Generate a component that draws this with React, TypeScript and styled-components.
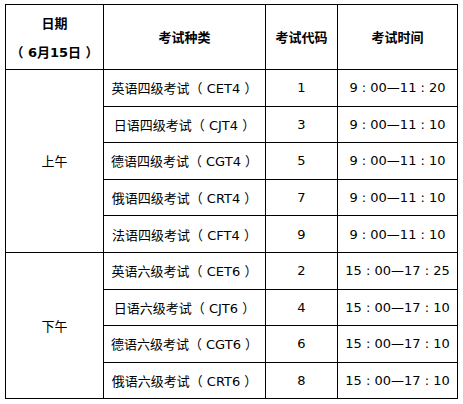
import styled, { createGlobalStyle } from "styled-components";

const GlobalStyle = createGlobalStyle`
  html, body {
    margin: 0;
    padding: 0;
    background: #ffffff;
  }
`

const Page = styled.div`
  padding: 4px 0 0 5px;
`

const Table = styled.table`
  border-collapse: collapse;
  table-layout: fixed;
  width: 452px;
  font-family: "DejaVu Sans", "Noto Sans CJK SC", sans-serif;
  font-size: 13px;
  color: #000;

  col:nth-child(1) { width: 98px; }
  col:nth-child(2) { width: 162px; }
  col:nth-child(3) { width: 72px; }
  col:nth-child(4) { width: 120px; }
`

const HeadCell = styled.th`
  border: 1px solid #000;
  height: 63px;
  padding: 1px 0 0;
  font-weight: bold;
  text-align: center;
  vertical-align: middle;
  line-height: 29px;
  white-space: pre;
`

const Cell = styled.td`
  border: 1px solid #000;
  height: 35.6px;
  padding: 0;
  text-align: center;
  vertical-align: middle;
  white-space: pre;
`

type Exam = { name: string; code: string; time: string }

const morning: Exam[] = [
  { name: "英语四级考试（ CET4 ）", code: "1", time: "9 : 00—11 : 20" },
  { name: "日语四级考试（ CJT4 ）", code: "3", time: "9 : 00—11 : 10" },
  { name: "德语四级考试（ CGT4 ）", code: "5", time: "9 : 00—11 : 10" },
  { name: "俄语四级考试（ CRT4 ）", code: "7", time: "9 : 00—11 : 10" },
  { name: "法语四级考试（ CFT4 ）", code: "9", time: "9 : 00—11 : 10" },
]

const afternoon: Exam[] = [
  { name: "英语六级考试（ CET6 ）", code: "2", time: "15 : 00—17 : 25" },
  { name: "日语六级考试（ CJT6 ）", code: "4", time: "15 : 00—17 : 10" },
  { name: "德语六级考试（ CGT6 ）", code: "6", time: "15 : 00—17 : 10" },
  { name: "俄语六级考试（ CRT6 ）", code: "8", time: "15 : 00—17 : 10" },
]

function Session({ label, exams }: { label: string; exams: Exam[] }) {
  return (
    <>
      {exams.map((e, i) => (
        <tr key={e.code}>
          {i === 0 && <Cell rowSpan={exams.length}>{label}</Cell>}
          <Cell>{e.name}</Cell>
          <Cell>{e.code}</Cell>
          <Cell>{e.time}</Cell>
        </tr>
      ))}
    </>
  )
}

export default function App() {
  return (
    <>
      <GlobalStyle />
      <Page>
        <Table>
          <colgroup>
            <col />
            <col />
            <col />
            <col />
          </colgroup>
          <thead>
            <tr>
              <HeadCell>
                日期
                <br />
                （ 6月15日 ）
              </HeadCell>
              <HeadCell>考试种类</HeadCell>
              <HeadCell>考试代码</HeadCell>
              <HeadCell>考试时间</HeadCell>
            </tr>
          </thead>
          <tbody>
            <Session label="上午" exams={morning} />
            <Session label="下午" exams={afternoon} />
          </tbody>
        </Table>
      </Page>
    </>
  )
}
